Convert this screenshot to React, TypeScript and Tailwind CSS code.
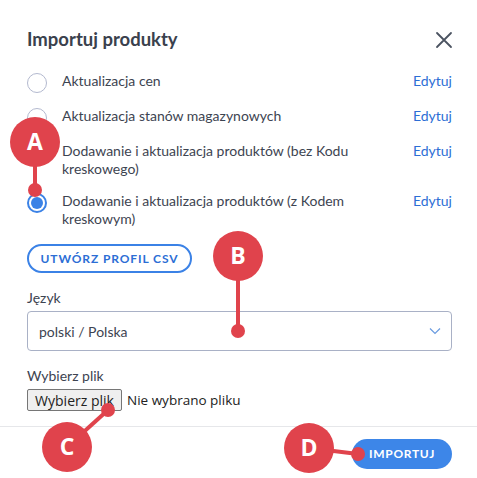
import React from "react";

const options = [
  { label: "Aktualizacja cen", checked: false },
  { label: "Aktualizacja stanów magazynowych", checked: false },
  { label: "Dodawanie i aktualizacja produktów (bez Kodu kreskowego)", checked: false },
  { label: "Dodawanie i aktualizacja produktów (z Kodem kreskowym)", checked: true },
];

const markers = [
  { letter: "A", cx: 35, cy: 142, dx: 35, dy: 190 },
  { letter: "B", cx: 238, cy: 256, dx: 238, dy: 331 },
  { letter: "C", cx: 67, cy: 447, dx: 108, dy: 410 },
  { letter: "D", cx: 309, cy: 448, dx: 358, dy: 454 },
];

function Radio({ checked }: { checked: boolean }) {
  if (checked) {
    return (
      <span className="mt-[1px] flex h-[20px] w-[20px] shrink-0 items-center justify-center rounded-full border-2 border-[#3b82e6] bg-white">
        <span className="h-[12px] w-[12px] rounded-full bg-[#3b82e6]" />
      </span>
    );
  }
  return <span className="mt-[1px] h-[20px] w-[20px] shrink-0 rounded-full border border-[#b3b9cf] bg-white" />;
}

export default function App() {
  return (
    <div className="relative h-[478px] w-[477px] overflow-hidden bg-white font-['Lato',sans-serif] text-[#3d4451]">
      <div className="pl-[27px] pr-[25px] pt-[28px]">
        <div className="flex h-[24px] items-center justify-between">
          <h1 className="text-[18.5px] font-bold text-[#3a414d]">Importuj produkty</h1>
          <svg width="18" height="18" viewBox="0 0 18 18" className="mr-[-1px]">
            <path d="M2 2 L16 16 M16 2 L2 16" stroke="#4b5361" strokeWidth="1.8" strokeLinecap="round" />
          </svg>
        </div>

        <div className="mt-[20px] flex flex-col gap-[14px]">
          {options.map((o) => (
            <div key={o.label} className="flex items-start">
              <Radio checked={o.checked} />
              <span className="ml-[15px] w-[290px] text-[14px] leading-[18px]">{o.label}</span>
              <span className="ml-auto text-[14px] leading-[18px] text-[#2c6ed5]">Edytuj</span>
            </div>
          ))}
        </div>

        <button className="mt-[16px] flex h-[29px] w-[165px] items-center justify-center rounded-full border-2 border-[#3b82e6] text-[12px] font-bold tracking-[0.9px] text-[#2c6ed5]">
          UTWÓRZ PROFIL CSV
        </button>

        <div className="mt-[16px] text-[14px] leading-[18px]">Język</div>
        <div className="mt-[4px] flex h-[40px] items-center justify-between rounded-[4px] border border-[#a9b1c6] pl-[11px] pr-[10px]">
          <span className="text-[14px]">polski / Polska</span>
          <svg width="12" height="8" viewBox="0 0 12 8">
            <path d="M1 1.5 L6 6.5 L11 1.5" fill="none" stroke="#6a9be0" strokeWidth="1.2" />
          </svg>
        </div>

        <div className="mt-[16px] text-[14px] leading-[18px]">Wybierz plik</div>
        <div className="mt-[4px] flex items-center gap-[5px] font-['Open_Sans',sans-serif] text-[13.5px] text-[#222]">
          <span className="flex h-[22px] w-[95px] items-center justify-center rounded-[2px] border border-[#767676] bg-[#efefef] text-[14px]">
            Wybierz plik
          </span>
          <span>Nie wybrano pliku</span>
        </div>
      </div>

      <div className="mt-[15px] flex justify-end border-t border-[#e6e7ea] pr-[25px] pt-[12px]">
        <button className="h-[30px] w-[100px] rounded-full bg-[#3d86e8] text-[12px] font-bold tracking-[0.7px] text-white">
          IMPORTUJ
        </button>
      </div>

      <svg className="pointer-events-none absolute left-0 top-0" width="477" height="478">
        {markers.map((m) => (
          <g key={m.letter}>
            <line x1={m.cx} y1={m.cy} x2={m.dx} y2={m.dy} stroke="#e0434c" strokeWidth="4" />
            <circle cx={m.dx} cy={m.dy} r="7" fill="#e0434c" />
            <circle cx={m.cx} cy={m.cy} r="25" fill="#e0434c" />
            <text
              x={m.cx}
              y={m.cy + 8}
              textAnchor="middle"
              fill="#fff"
              fontSize="23"
              fontWeight="700"
              fontFamily="'Open Sans', sans-serif"
            >
              {m.letter}
            </text>
          </g>
        ))}
      </svg>
    </div>
  );
}
